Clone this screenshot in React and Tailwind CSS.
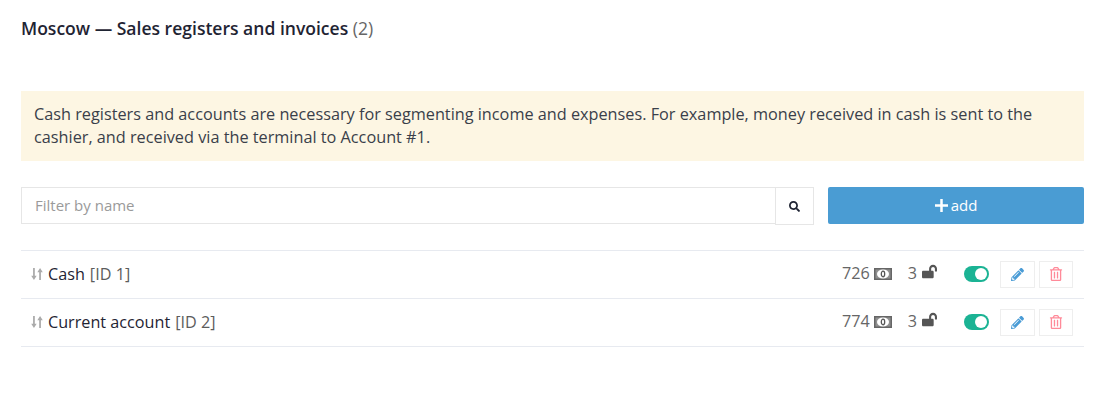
import React from "react";
import { FaSearch, FaLockOpen, FaPencilAlt, FaRegTrashAlt } from "react-icons/fa";

function SortIcon() {
  return (
    <svg width="12" height="12" viewBox="0 0 11 11" className="mb-[2px] text-[#aaaaaa] shrink-0" fill="currentColor">
      <path d="M1.9 0h1.6v7H5.2L2.7 11 .2 7H1.9z" />
      <path d="M7.5 11h1.6V4h1.7L8.3 0 5.8 4h1.7z" />
    </svg>
  );
}

function MoneyIcon() {
  return (
    <svg width="18" height="12" viewBox="0 0 18 12" className="ml-[4px] mb-[1px] shrink-0">
      <rect width="18" height="12" fill="#666666" />
      <rect x="1.5" y="1.5" width="15" height="9" fill="#8f8f8f" />
      <ellipse cx="9" cy="6" rx="6" ry="4.5" fill="#ffffff" />
      <ellipse cx="9" cy="6" rx="1.7" ry="2.8" fill="none" stroke="#555555" strokeWidth="1.3" />
    </svg>
  );
}

function PlusIcon() {
  return (
    <svg width="13" height="13" viewBox="0 0 13 13" className="mr-[3px] shrink-0" fill="currentColor">
      <rect x="5.25" width="2.5" height="13" />
      <rect y="5.25" width="13" height="2.5" />
    </svg>
  );
}

function Row({ name, id, count }) {
  return (
    <div className="flex items-center h-12 border-b border-[#e7eaf0] pl-[10px] pr-[11px]">
      <SortIcon />
      <span className="ml-[5px] mb-[1px] text-[#1f2433]">{name}</span>
      <span className="ml-[5px] mb-[1px] text-[#5c5c5c]">[ID {id}]</span>
      <div className="ml-auto flex items-center">
        <span className="mb-[3px] text-[#666666]">{count}</span>
        <MoneyIcon />
        <span className="ml-[16px] mb-[3px] text-[#666666]">3</span>
        <FaLockOpen className="ml-[5px] -mt-[5px] text-[15px] text-[#555555]" />
        <span className="ml-[27px] relative w-[25px] h-[16px] rounded-full bg-[#1bb394]">
          <span className="absolute right-[2px] top-[2px] w-[12px] h-[12px] rounded-full bg-white" />
        </span>
        <span className="ml-[11px] w-[35px] h-[27px] flex items-center justify-center border border-[#eeeeee]">
          <FaPencilAlt className="text-[13px] text-[#4a9cd6]" />
        </span>
        <span className="ml-[4px] w-[34px] h-[27px] flex items-center justify-center border border-[#eeeeee]">
          <FaRegTrashAlt className="text-[14px] text-[#ff8a99]" />
        </span>
      </div>
    </div>
  );
}

export default function App() {
  return (
    <div className="w-[1112px] h-[400px] bg-white pl-[21px] pr-[28px] font-['Open_Sans',sans-serif] text-[16.2px] overflow-hidden">
      <h1 className="pt-[16px] h-[91px] text-[17.55px] leading-[24px] font-semibold text-[#1f2433]">
        Moscow — Sales registers and invoices <span className="font-normal text-[#666666]">(2)</span>
      </h1>
      <div className="h-[70px] bg-[#fdf6e3] px-[13px] py-[12px] leading-[23px] text-[16.25px] text-[#3a3f4a]">
        Cash registers and accounts are necessary for segmenting income and expenses. For example, money received in cash is sent to the cashier, and received via the terminal to Account #1.
      </div>
      <div className="mt-[26px] flex">
        <div className="flex-1 flex">
          <input
            placeholder="Filter by name"
            className="flex-1 h-[37px] px-[13px] pb-[2px] border border-[#e6e6e6] outline-none placeholder:text-[#9a9a9a] text-[15px]"
          />
          <button className="-ml-px w-[39px] h-[38px] flex items-center justify-center border border-[#e6e6e6] bg-white">
            <FaSearch className="text-[11px] text-[#1f2433]" />
          </button>
        </div>
        <button className="ml-[14px] w-[256px] h-[37px] rounded-[2px] bg-[#4a9cd3] text-white flex items-center justify-center font-medium text-[15px]">
          <PlusIcon />
          add
        </button>
      </div>
      <div className="mt-[25px] border-t border-[#e7eaf0]">
        <Row name="Cash" id="1" count="726" />
        <Row name="Current account" id="2" count="774" />
      </div>
    </div>
  );
}
